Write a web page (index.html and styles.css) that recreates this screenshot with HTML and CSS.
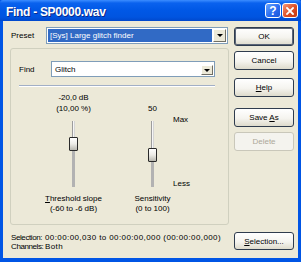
FILE: index.html
```html
<!DOCTYPE html>
<html lang="en">
<head>
<meta charset="UTF-8">
<meta name="viewport" content="width=device-width, initial-scale=1.0">
<title>Find - SP0000.wav</title>
<link rel="stylesheet" href="styles.css">
</head>
<body>
<div class="window">
  <div class="titlebar">
    <span class="title">Find - SP0000.wav</span>
    <div class="caption-buttons">
      <span class="cap-btn cap-help">?</span>
      <span class="cap-btn cap-close">
        <svg width="8" height="8" viewBox="0 0 8 8"><path d="M1 1L7 7M7 1L1 7" stroke="#fff" stroke-width="1.8" stroke-linecap="square"/></svg>
      </span>
    </div>
  </div>

  <div class="client">
    <div class="main">
      <div class="field-row preset-row">
        <label class="field-label preset-label">Preset</label>
        <div class="combo preset-combo">
          <span class="combo-value selected">[Sys] Large glitch finder</span>
          <span class="drop-btn"><i class="arrow"></i></span>
        </div>
      </div>

      <div class="groupbox">
        <div class="field-row find-row">
          <label class="field-label find-label">Find</label>
          <div class="combo find-combo">
            <span class="combo-value">Glitch</span>
            <span class="drop-btn drop-small"><i class="arrow"></i></span>
          </div>
        </div>

        <div class="separator"></div>

        <div class="sliders">
          <div class="slider-value thr-value">-20,0 dB<br>(10,00 %)</div>
          <div class="slider-value sens-value">50</div>

          <div class="track thr-track" style="--pos:23px"><span class="thumb"></span></div>
          <div class="track sens-track" style="--pos:34px"><span class="thumb"></span></div>

          <div class="scale">
            <span>Max</span>
            <span>Less</span>
          </div>

          <div class="slider-caption thr-caption"><u>T</u>hreshold slope<br>(-60 to -6 dB)</div>
          <div class="slider-caption sens-caption">Sensitivity<br>(0 to 100)</div>
        </div>
      </div>
    </div>

    <div class="buttons">
      <button class="btn btn-default">OK</button>
      <button class="btn btn-cancel">Cancel</button>
      <button class="btn btn-help"><u>H</u>elp</button>
      <button class="btn btn-save">Save <u>A</u>s</button>
      <button class="btn btn-delete" disabled>Delete</button>
    </div>

    <div class="info">
      <span class="info-label">Selection:</span>
      <span class="info-value">00:00:00,030 to 00:00:00,000 (00:00:00,000)</span>
      <span class="info-label">Channels:</span>
      <span class="info-value">Both</span>
    </div>

    <button class="btn btn-selection"><u>S</u>election...</button>
  </div>
</div>
</body>
</html>
```

FILE: styles.css
```css
* {
  margin: 0;
  padding: 0;
  box-sizing: border-box;
}

body {
  width: 301px;
  height: 262px;
  overflow: hidden;
  background: #0054e3;
  font-family: "Liberation Sans", Arial, sans-serif;
  font-size: 8px;
  color: #000;
}

/* Window frame */
.window {
  width: 301px;
  height: 262px;
  display: flex;
  flex-direction: column;
}

.titlebar {
  height: 21px;
  display: flex;
  align-items: flex-start;
  padding: 3px 3px 0 6px;
  background: linear-gradient(#3c8dff 0, #0a62ee 3px, #0058e6 10px, #0054e0 17px, #0048cc 21px);
  border-radius: 3px 3px 0 0;
}

.title {
  flex: 1;
  margin-top: 2px;
  color: #fff;
  font-size: 12px;
  font-weight: bold;
  line-height: 14px;
  letter-spacing: -0.3px;
  text-shadow: 1px 1px #0a2a8a;
}

.caption-buttons {
  display: flex;
  gap: 1px;
}

.cap-btn {
  width: 16px;
  height: 15px;
  border: 1px solid #fff;
  border-radius: 3px;
  display: flex;
  align-items: center;
  justify-content: center;
}

.cap-help {
  background: linear-gradient(135deg, #6aa6ff, #2a6cf0 55%, #1a55d8);
  color: #fff;
  font-size: 12px;
  font-weight: bold;
  line-height: 1;
}

.cap-close {
  background: linear-gradient(135deg, #f4977a, #de4e24 55%, #c53a12);
}

/* Client area */
.client {
  flex: 1;
  display: grid;
  grid-template-columns: 219px 60px;
  grid-template-rows: 198px 18px;
  column-gap: 5px;
  row-gap: 7px;
  padding: 6px 4px 8px 7px;
  background: #ece9d8;
  border: solid #0055e5;
  border-width: 0 3px 4px;
}

.field-row {
  display: flex;
  align-items: center;
}

.preset-row {
  height: 17px;
}

.preset-label {
  width: 36px;
  padding-left: 1px;
}

.find-label {
  width: 32px;
}

.combo {
  display: flex;
  align-items: stretch;
  background: #fff;
  border: 1px solid #7f9db9;
}

.preset-combo {
  width: 182px;
  height: 17px;
  padding: 1px;
}

.find-combo {
  width: 164px;
  height: 16px;
  padding: 1px;
}

.combo-value {
  flex: 1;
  display: flex;
  align-items: center;
  padding-left: 2px;
  white-space: nowrap;
}

.combo-value.selected {
  background: #316ac5;
  color: #fff;
}

.drop-btn {
  width: 13px;
  margin-left: 1px;
  display: flex;
  align-items: center;
  justify-content: center;
  background: #ece9d8;
  border: 1px solid;
  border-color: #fff #716f64 #716f64 #fff;
}

.drop-small {
  width: 12px;
  height: 10px;
  align-self: flex-end;
}

.arrow {
  border-left: 3px solid transparent;
  border-right: 3px solid transparent;
  border-top: 3px solid #000;
}

/* Group box */
.groupbox {
  height: 177px;
  margin-top: 4px;
  padding: 12px 13px 0 8px;
  border: 1px solid #d0d0bf;
  border-radius: 3px;
}

.separator {
  margin-top: 8px;
  border-top: 1px solid #a2afc6;
  border-bottom: 1px solid #fff;
}

/* Sliders */
.sliders {
  margin: 5px 0 0 15px;
  display: grid;
  grid-template-columns: 79px 20px 39px 1px 40px;
  grid-template-rows: 22px 66px 20px;
  row-gap: 7px;
  grid-template-areas:
    "thrval . sensval . ."
    "thrtrack . senstrack . scale"
    "thrcap . senscap . .";
}

.slider-value {
  align-self: end;
  text-align: center;
  line-height: 11px;
  white-space: nowrap;
}

.thr-value { grid-area: thrval; }
.sens-value { grid-area: sensval; }

.track {
  position: relative;
  justify-self: center;
  width: 3px;
  background:
    linear-gradient(to bottom, transparent var(--pos), #b2b2b2 var(--pos)),
    linear-gradient(to right, #9c9c9c 1px, #f6f6f6 1px, #f6f6f6 2px, #d4d4d4 2px);
}

.thr-track { grid-area: thrtrack; }
.sens-track { grid-area: senstrack; }

.thumb {
  position: absolute;
  left: -3px;
  top: calc(var(--pos) - 7px);
  width: 9px;
  height: 14px;
  border: 1px solid #2a2a2a;
  border-radius: 1px;
  background: linear-gradient(#fff, #ecebe6 50%, #b9b8b0);
}

.scale {
  grid-area: scale;
  margin: -6px 0 -2px;
  display: flex;
  flex-direction: column;
  justify-content: space-between;
  line-height: 10px;
}

.slider-caption {
  text-align: center;
  line-height: 10px;
  white-space: nowrap;
}

.thr-caption { grid-area: thrcap; }
.sens-caption { grid-area: senscap; }

/* Buttons */
.buttons {
  display: flex;
  flex-direction: column;
}

.btn {
  width: 60px;
  height: 19px;
  font-family: inherit;
  font-size: 8px;
  color: #000;
  background: linear-gradient(#fff, #f5f4ef 55%, #dedbcc);
  border: 1px solid #2f3c4e;
  border-radius: 3px;
}

.btn-default {
  box-shadow: inset 0 0 0 1px #5a6578;
}

.btn-cancel { margin-top: 5px; }
.btn-help { margin-top: 8px; }
.btn-save { margin-top: 11px; }
.btn-delete { margin-top: 5px; }

.btn:disabled {
  color: #aca899;
  border-color: #c9c7ba;
  background: #f4f3ee;
}

.btn-selection {
  height: 18px;
}

/* Selection info */
.info {
  display: grid;
  grid-template-columns: 34px auto;
  align-content: start;
  padding: 1px 0 0 1px;
  line-height: 9px;
  white-space: nowrap;
}

.info-label {
  letter-spacing: -0.4px;
}

.info-value {
  letter-spacing: 0.4px;
}
```
